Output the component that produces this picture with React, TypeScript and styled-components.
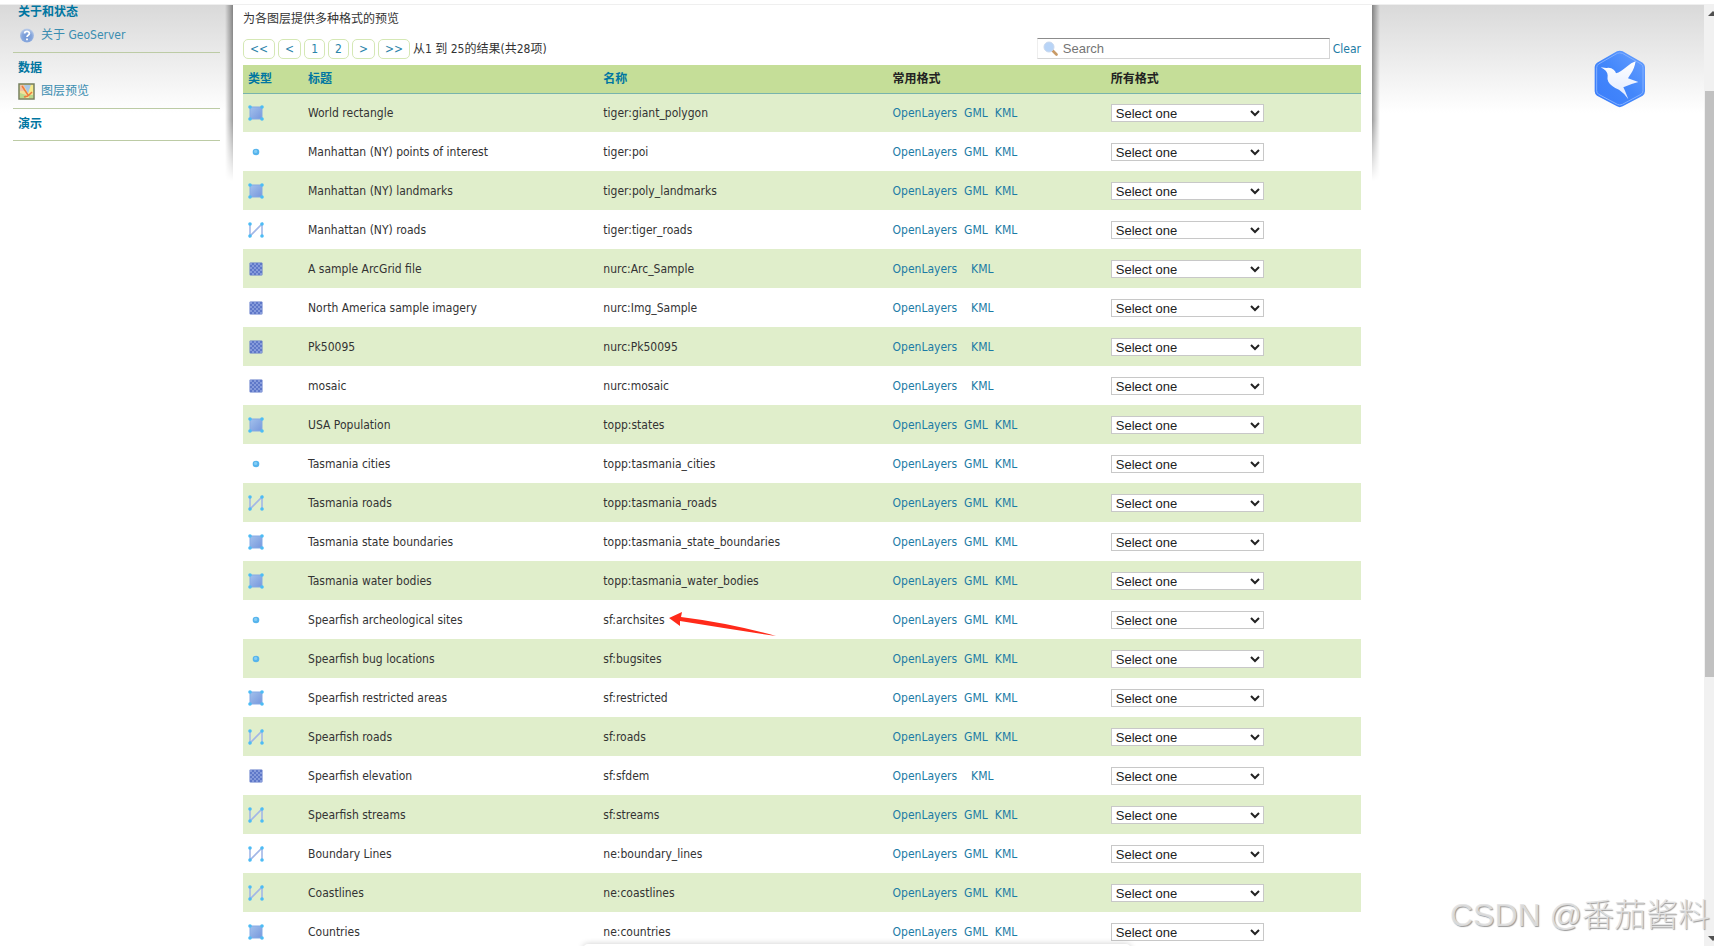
import React, { useId } from "react";
import styled, { createGlobalStyle } from "styled-components";

type Kind = "polygon" | "point" | "line" | "raster";

const layers: { kind: Kind; title: string; name: string }[] = [
  { kind: "polygon", title: "World rectangle", name: "tiger:giant_polygon" },
  { kind: "point", title: "Manhattan (NY) points of interest", name: "tiger:poi" },
  { kind: "polygon", title: "Manhattan (NY) landmarks", name: "tiger:poly_landmarks" },
  { kind: "line", title: "Manhattan (NY) roads", name: "tiger:tiger_roads" },
  { kind: "raster", title: "A sample ArcGrid file", name: "nurc:Arc_Sample" },
  { kind: "raster", title: "North America sample imagery", name: "nurc:Img_Sample" },
  { kind: "raster", title: "Pk50095", name: "nurc:Pk50095" },
  { kind: "raster", title: "mosaic", name: "nurc:mosaic" },
  { kind: "polygon", title: "USA Population", name: "topp:states" },
  { kind: "point", title: "Tasmania cities", name: "topp:tasmania_cities" },
  { kind: "line", title: "Tasmania roads", name: "topp:tasmania_roads" },
  { kind: "polygon", title: "Tasmania state boundaries", name: "topp:tasmania_state_boundaries" },
  { kind: "polygon", title: "Tasmania water bodies", name: "topp:tasmania_water_bodies" },
  { kind: "point", title: "Spearfish archeological sites", name: "sf:archsites" },
  { kind: "point", title: "Spearfish bug locations", name: "sf:bugsites" },
  { kind: "polygon", title: "Spearfish restricted areas", name: "sf:restricted" },
  { kind: "line", title: "Spearfish roads", name: "sf:roads" },
  { kind: "raster", title: "Spearfish elevation", name: "sf:sfdem" },
  { kind: "line", title: "Spearfish streams", name: "sf:streams" },
  { kind: "line", title: "Boundary Lines", name: "ne:boundary_lines" },
  { kind: "line", title: "Coastlines", name: "ne:coastlines" },
  { kind: "polygon", title: "Countries", name: "ne:countries" },
];

const Global = createGlobalStyle`
  * { box-sizing: border-box; }
  body {
    margin: 0;
    overflow: hidden;
    background: #fff;
    color: #333;
    font: 12px/18px "DejaVu Sans Condensed", "Noto Sans CJK SC", sans-serif;
  }
`;

const Page = styled.div`
  position: relative;
  display: flex;
  height: 100vh;
  overflow: hidden;
  border-top: 4px solid #fff;
`;

const Body = styled.div`
  flex: 1;
  min-width: 0;
  display: flex;
  border-top: 1px solid #efefef;
  background: linear-gradient(#d9d9d9, #fff 108px);
`;

const Sidebar = styled.nav`
  width: 233px;
  flex: none;
  padding: 0 13px;
`;

const Group = styled.section`
  padding: 8px 5px 5px;
  border-bottom: 1px solid #bccba5;
  &:first-child { padding-top: 0; }
`;

const GroupTitle = styled.h2`
  margin: 0 0 4px;
  font-size: 12px;
  line-height: 14px;
  font-weight: 700;
  color: #0076a1;
`;

const SideLink = styled.a`
  display: flex;
  align-items: center;
  gap: 6px;
  height: 24px;
  color: #3a8db0;
  text-decoration: none;
`;

const Main = styled.main`
  position: relative;
  flex: 1;
  min-width: 0;
  padding: 5px 11px 0 10px;
  background: #fff;
`;

const Shade = styled.i<{ $side: "left" | "right" }>`
  position: absolute;
  top: 0;
  ${(p) => (p.$side === "left" ? "right: 100%" : "left: 100%")};
  width: 8px;
  height: 176px;
  background: linear-gradient(to ${(p) => p.$side}, rgba(0, 0, 0, 0.4), rgba(0, 0, 0, 0));
  mask-image: linear-gradient(#000 65%, transparent);
`;

const Gutter = styled.aside`
  width: 332px;
  flex: none;
  padding: 45px 58px 0 0;
  display: flex;
  justify-content: flex-end;
  align-items: flex-start;
`;

const Intro = styled.p`
  margin: 0;
`;

const Toolbar = styled.div`
  display: flex;
  align-items: center;
  height: 37px;
  padding-top: 4px;
  gap: 3px;
`;

const PageButton = styled.button`
  height: 20px;
  padding: 0 6px;
  border: 1px solid #d5e8b5;
  border-radius: 5px;
  background: #fff;
  color: #2a84a9;
  font: inherit;
  line-height: 18px;
`;

const SearchBox = styled.label`
  display: flex;
  align-items: center;
  gap: 5px;
  width: 293px;
  height: 21px;
  margin-left: auto;
  padding: 0 5px;
  border: 1px solid #d4d4d4;
  border-top-color: #8c8c8c;
  border-left-color: #eee;
`;

const SearchInput = styled.input`
  flex: 1;
  min-width: 0;
  padding: 0;
  border: 0;
  outline: 0;
  background: none;
  font: 13px/18px "Liberation Sans", sans-serif;
  &::placeholder { color: #757575; }
`;

const Link = styled.a`
  color: #1b7ba5;
  text-decoration: none;
`;

const Table = styled.table`
  width: 100%;
  table-layout: fixed;
  border-collapse: collapse;
`;

const Head = styled.th<{ $sortable?: boolean }>`
  height: 28px;
  padding: 0 5px;
  border-bottom: 1px solid #78b4ac;
  background: #c5de98;
  color: ${(p) => (p.$sortable ? "#0076a1" : "#222")};
  text-align: left;
  font-weight: 700;
`;

const Row = styled.tr`
  height: 39px;
  &:nth-child(odd) { background: #e0eecb; }
`;

const Cell = styled.td`
  padding: 0 5px;
  svg { display: block; }
`;

const Formats = styled.div<{ $sparse: boolean }>`
  display: flex;
  gap: ${(p) => (p.$sparse ? 14 : 7)}px;
`;

const NameCell = styled.span`
  position: relative;
`;

const ArrowMark = styled.svg`
  position: absolute;
  left: 100%;
  top: 0;
  margin: -1px 0 0 4px;
`;

const FormatSelect = styled.select`
  display: block;
  width: 153px;
  height: 18px;
  padding: 0;
  border: 1px solid #c8c8c8;
  border-radius: 0;
  background-color: #fff;
  color: #222;
  font: 13px/16px "Liberation Sans", sans-serif;
`;

const Scrollbar = styled.div`
  position: relative;
  width: 10px;
  flex: none;
  padding: 87px 0 269px 1px;
  background: #f1f1f1;
  overflow: hidden;
`;

const Thumb = styled.div`
  height: 100%;
  background: #c1c1c1;
`;

const Arrow = styled.svg<{ $down?: boolean }>`
  position: absolute;
  left: 4px;
  ${(p) => (p.$down ? "bottom: 4px" : "top: 7px")};
`;

const Popup = styled.div`
  position: absolute;
  left: 34%;
  right: 34%;
  bottom: -8px;
  height: 10px;
  border-radius: 6px;
  background: #fff;
  box-shadow: 0 0 6px rgba(0, 0, 0, 0.2);
`;

const Watermark = styled.div`
  position: absolute;
  right: 4px;
  bottom: 9px;
  color: rgba(226, 226, 226, 0.9);
  text-shadow: 1px 1px 1px #999;
  font: 300 32px/44px "Liberation Sans", "Noto Sans CJK SC", sans-serif;
`;

function KindIcon({ kind }: { kind: Kind }) {
  const id = useId();
  const corners = [[2, 2], [14, 2], [2, 14], [14, 14]];
  return (
    <svg width="16" height="16" viewBox="0 0 16 16" role="img" aria-label={kind}>
      {kind === "polygon" && (
        <>
          <linearGradient id={id} x1="0" y1="0" x2="1" y2="1">
            <stop offset="0" stopColor="#a3c1ec" />
            <stop offset="1" stopColor="#7797dc" />
          </linearGradient>
          <path d="M2 2h12v12H2z" fill={`url(#${id})`} stroke="#85a9e4" />
        </>
      )}
      {kind === "line" && <path d="M2 2v12L14 2v12" fill="none" stroke="#a3b7e6" strokeWidth="1.6" />}
      {(kind === "polygon" || kind === "line") &&
        corners.map(([x, y]) => <circle key={`${x}-${y}`} cx={x} cy={y} r="1.8" fill="#4cbcf5" />)}
      {kind === "point" && (
        <>
          <circle cx="8" cy="8" r="3.3" fill="#56b4ec" />
          <circle cx="7.6" cy="7.4" r="1.6" fill="#84cdf5" />
        </>
      )}
      {kind === "raster" && (
        <>
          <rect x="1.5" y="1.5" width="13" height="13" rx="1" fill="#5f78c8" />
          {Array.from({ length: 18 }, (_, i) => {
            const r = Math.floor(i / 3);
            return <rect key={i} x={2 + (i % 3) * 4 + (r % 2) * 2} y={2 + r * 2} width="2" height="2" fill="#869bdb" />;
          })}
        </>
      )}
    </svg>
  );
}

function BirdLogo() {
  return (
    <svg width="52" height="58" viewBox="762 150 156 174" role="img" aria-label="bird">
      <linearGradient id="hex" x1="1" y1="0" x2="0" y2="1">
        <stop offset="0" stopColor="#6aa1ff" />
        <stop offset="0.5" stopColor="#4387fb" />
        <stop offset="1" stopColor="#3a7cfa" />
      </linearGradient>
      <linearGradient id="wing" x1="0" y1="0" x2="0" y2="1">
        <stop offset="0" stopColor="#fff" />
        <stop offset="1" stopColor="#dfe9ff" />
      </linearGradient>
      <path
        d="M831 154q8-4 17 0l60 34q7 5 7 13v73q0 8-7 13l-60 32q-9 5-17 0l-60-32q-7-5-7-13v-73q0-8 7-13z"
        fill="url(#hex)"
      />
      <path
        d="M832 160q7-3 15 0l56 32q6 4 6 11v69q0 7-6 11l-56 30q-8 4-15 0l-56-30q-6-4-6-11v-69q0-7 6-11z"
        fill="none"
        stroke="#83b0ff"
        strokeWidth="3"
      />
      <path
        d="M782 202l17 2q13-3 22 5 6 5 7 11 14-5 32-20 14-12 27-16-4 22-13 35-6 9-10 16l31 11q-24 6-45 16 6 12 15 36-11-18-28-29-25-11-32-24-4-8-2-19-1-15-21-24z"
        fill="url(#wing)"
      />
    </svg>
  );
}

export default function App() {
  return (
    <Page>
      <Global />
      <Body>
        <Sidebar>
          <Group>
            <GroupTitle>关于和状态</GroupTitle>
            <SideLink href="#about">
              <svg width="17" height="17" viewBox="0 0 17 17" aria-hidden="true">
                <radialGradient id="ball" cx="0.5" cy="0.6" r="0.6">
                  <stop offset="0" stopColor="#6f96d6" />
                  <stop offset="0.6" stopColor="#86a6dc" />
                  <stop offset="1" stopColor="#c3d2ea" />
                </radialGradient>
                <circle cx="9" cy="8.5" r="7" fill="url(#ball)" />
                <path d="M6.6 6.6c0-3 4.800-3 4.800 0 0 1.800-2.400 1.600-2.400 3.400M9 11.600v1.600" fill="none" stroke="#fff" strokeWidth="1.8" />
              </svg>
              关于 GeoServer
            </SideLink>
          </Group>
          <Group>
            <GroupTitle>数据</GroupTitle>
            <SideLink href="#preview">
              <svg width="17" height="17" viewBox="0 0 17 17" aria-hidden="true">
                <path d="M1 1h15v15H1z" fill="#f3e09a" />
                <path d="M2 2h5v6H2z" fill="#f1c3a4" />
                <path d="M6 2h7l-3 9z" fill="#a9c8e8" />
                <path d="M13 2h2v8l-5 1z" fill="#f6ea8c" />
                <path d="M2 10l6 2v3H2zM11 12h4v3h-4z" fill="#b9d98c" />
                <path d="M4 3l6 9M14 9l-4 4M6 14l4-1" fill="none" stroke="#ee7a3c" strokeWidth="1.500" />
                <path d="M1 1h15v15H1z" fill="none" stroke="#75805f" strokeWidth="1.500" />
              </svg>
              图层预览
            </SideLink>
          </Group>
          <Group>
            <GroupTitle>演示</GroupTitle>
          </Group>
        </Sidebar>
        <Main>
          <Shade $side="left" />
          <Shade $side="right" />
          <Intro>为各图层提供多种格式的预览</Intro>
          <Toolbar>
            {["<<", "<", "1", "2", ">", ">>"].map((t) => (
              <PageButton key={t}>{t}</PageButton>
            ))}
            <span>从1 到 25的结果(共28项)</span>
            <SearchBox>
              <svg width="15" height="15" viewBox="0 0 15 15" aria-hidden="true">
                <path d="M9.500 9.500l4 4" stroke="#c89a66" strokeWidth="2.600" strokeLinecap="round" />
                <circle cx="6" cy="6" r="5" fill="#b8d4f7" stroke="#c9d8ee" />
              </svg>
              <SearchInput placeholder="Search" aria-label="Search" />
            </SearchBox>
            <Link href="#clear">Clear</Link>
          </Toolbar>
          <Table>
            <colgroup>
              {[60, 295, 289, 218, 255].map((w) => (
                <col key={w} width={w} />
              ))}
            </colgroup>
            <thead>
              <tr>
                <Head $sortable>类型</Head>
                <Head $sortable>标题</Head>
                <Head $sortable>名称</Head>
                <Head>常用格式</Head>
                <Head>所有格式</Head>
              </tr>
            </thead>
            <tbody>
              {layers.map((l) => (
                <Row key={l.name}>
                  <Cell><KindIcon kind={l.kind} /></Cell>
                  <Cell>{l.title}</Cell>
                  <Cell>
                    <NameCell>
                      {l.name}
                      {l.name === "sf:archsites" && (
                        <ArrowMark width="108" height="24" viewBox="0 0 108 24" aria-hidden="true">
                          <path d="M0 6L13 0l-1 5Q60 11 107 24 60 17 11 9l0 5z" fill="#ff2a1a" />
                        </ArrowMark>
                      )}
                    </NameCell>
                  </Cell>
                  <Cell>
                    <Formats $sparse={l.kind === "raster"}>
                      <Link href="#ol">OpenLayers</Link>
                      {l.kind !== "raster" && <Link href="#gml">GML</Link>}
                      <Link href="#kml">KML</Link>
                    </Formats>
                  </Cell>
                  <Cell>
                    <FormatSelect aria-label={`${l.name} 所有格式`}>
                      <option>Select one</option>
                    </FormatSelect>
                  </Cell>
                </Row>
              ))}
            </tbody>
          </Table>
        </Main>
        <Gutter>
          <BirdLogo />
        </Gutter>
      </Body>
      <Scrollbar>
        <Arrow width="10" height="6" viewBox="0 0 10 6"><path d="M0 5L5 0l5 5z" fill="#505050" /></Arrow>
        <Thumb />
        <Arrow $down width="10" height="6" viewBox="0 0 10 6"><path d="M0 0l5 5 5-5z" fill="#505050" /></Arrow>
      </Scrollbar>
      <Popup />
      <Watermark>CSDN @番茄酱料</Watermark>
    </Page>
  );
}
